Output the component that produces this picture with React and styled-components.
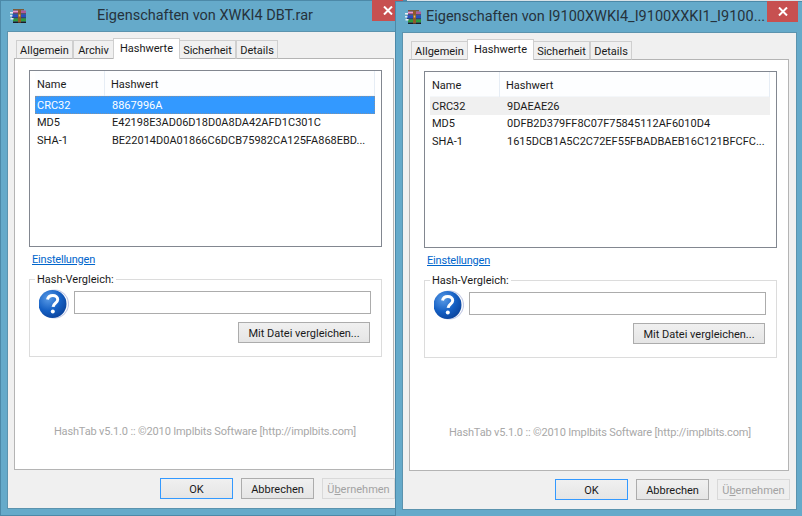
import React from 'react';
import styled, { createGlobalStyle } from 'styled-components';

const GlobalStyle = createGlobalStyle`
  html, body {
    margin: 0;
    padding: 0;
    background: #d8e2e8;
  }
  * {
    box-sizing: border-box;
  }
`;

const Desktop = styled.div`
  position: relative;
  width: 802px;
  height: 516px;
  overflow: hidden;
  font-family: Roboto, "Open Sans", sans-serif;
  font-size: 11px;
  color: #1a1a1a;
`;

const Window = styled.div`
  position: absolute;
  left: ${(p) => p.$left}px;
  top: ${(p) => p.$top}px;
  width: 407px;
  height: 516px;
  display: flex;
  flex-direction: column;
  padding: 0 6px 8px 8px;
  background: #65aaca;
  box-shadow: inset 1px 1px 0 #4c89a8, inset 0 -1px 0 #4c89a8;
`;

const TitleBar = styled.div`
  display: flex;
  align-items: flex-start;
  height: 32px;
  margin: 0 -2px 0 -8px;
  padding-left: 10px;
`;

const AppIcon = styled.svg`
  flex: none;
  width: 16px;
  height: 15px;
  margin-top: 9px;
`;

const TitleText = styled.div`
  flex: 1;
  margin-left: 5px;
  padding-left: ${(p) => (p.$centered ? '7px' : '0')};
  text-align: ${(p) => (p.$centered ? 'center' : 'left')};
  font-size: 14.5px;
  line-height: 32px;
  color: #25323c;
  white-space: nowrap;
`;

const CloseButton = styled.div`
  flex: none;
  display: flex;
  align-items: center;
  justify-content: center;
  width: 31px;
  height: 21px;
  background: #c75050;
`;

const Client = styled.div`
  flex: 1;
  display: flex;
  flex-direction: column;
  padding: 6px 7px 8px 6px;
  background: #f0f0f0;
  box-shadow: 0 0 0 1px #5b93ae;
`;

const TabStrip = styled.div`
  display: flex;
  align-items: flex-end;
  height: 21px;
  padding-left: 2px;
  margin-bottom: -1px;
  position: relative;
  z-index: 1;
`;

const Tab = styled.div`
  display: flex;
  align-items: center;
  justify-content: center;
  width: ${(p) => p.$width}px;
  height: ${(p) => (p.$active ? 21 : 19)}px;
  margin-right: ${(p) => (p.$active ? -1 : 0)}px;
  margin-left: ${(p) => (p.$active ? -1 : 0)}px;
  padding: ${(p) => (p.$active ? '0 0 2px' : '1px 0 0')};
  border: 1px solid #cfcfcf;
  border-bottom: ${(p) => (p.$active ? 'none' : '1px solid #b4b4b4')};
  background: ${(p) => (p.$active ? '#fff' : '#f0f0f0')};
  position: relative;
  z-index: ${(p) => (p.$active ? 2 : 0)};
`;

const Page = styled.div`
  width: 380px;
  height: 412px;
  display: flex;
  flex-direction: column;
  padding: 11px 11px 0 14px;
  background: #fff;
  border: 1px solid #b4b4b4;
`;

const HashList = styled.div`
  flex: none;
  height: 177px;
  padding: 0 6px 0 5px;
  border: 1px solid #828790;
  background: #fff;
`;

const HeaderRow = styled.div`
  display: flex;
  height: 25px;
  background: #fdfeff;
  box-shadow: inset 0 -1px 0 #f4f7fa;
`;

const HeaderCell = styled.div`
  display: flex;
  align-items: center;
  width: ${(p) => p.$width}px;
  flex: ${(p) => (p.$grow ? 1 : 'none')};
  padding-left: ${(p) => p.$indent}px;
  padding-top: 1px;
  border-right: 1px solid #e6edf5;
`;

const Row = styled.div`
  display: flex;
  align-items: center;
  height: 17.5px;
  padding-top: 1px;
  background: ${(p) => (p.$selected ? '#3399ff' : p.$muted ? '#f0f0f0' : 'transparent')};
  color: ${(p) => (p.$selected ? '#fff' : 'inherit')};
  outline: ${(p) => (p.$selected ? '1px dotted rgba(190, 140, 90, 0.55)' : 'none')};
  outline-offset: -1px;
  white-space: nowrap;
`;

const NameCell = styled.div`
  flex: none;
  width: 77px;
  padding-left: 2px;
`;

const SettingsLink = styled.a`
  align-self: flex-start;
  margin: 5px 0 -1px 3px;
  line-height: 16px;
  letter-spacing: -0.2px;
  color: #0066cc;
  text-decoration: underline;
`;

const CompareGroup = styled.fieldset`
  flex: none;
  min-width: 0;
  margin: 4px 0 0;
  padding: 4px 10px 12px 9px;
  height: 86px;
  border: 1px solid #dcdcdc;
`;

const GroupLegend = styled.legend`
  position: relative;
  top: 1px;
  margin-left: -4px;
  padding: 0 2px;
  line-height: 16px;
`;

const CompareRow = styled.div`
  display: flex;
  align-items: flex-start;
  gap: 5px;
  height: 23px;
`;

const HelpIcon = styled.svg`
  flex: none;
  width: 30px;
  height: 30px;
  margin-top: -2px;
`;

const CompareInput = styled.div`
  flex: 1;
  height: 23px;
  border: 1px solid #acacac;
  background: #fff;
`;

const CompareActions = styled.div`
  display: flex;
  justify-content: flex-end;
  margin: 8px 1px 0 0;
`;

const Button = styled.div`
  display: flex;
  align-items: center;
  justify-content: center;
  width: ${(p) => p.$width}px;
  height: 21px;
  padding-top: 1px;
  border: 1px solid ${(p) => (p.$primary ? '#3399ff' : p.$disabled ? '#d9d9d9' : '#acacac')};
  background: ${(p) => (p.$disabled ? '#efefef' : 'linear-gradient(#f0f0f0, #e5e5e5)')};
  color: ${(p) => (p.$disabled ? '#a3a3a3' : 'inherit')};
`;

const Credit = styled.div`
  margin-top: 65px;
  margin-left: -14px;
  margin-right: -11px;
  padding-left: 2px;
  line-height: 20px;
  letter-spacing: -0.15px;
  text-align: center;
  color: #a8a8a8;
`;

const ButtonBar = styled.div`
  display: flex;
  justify-content: flex-end;
  gap: 8px;
  margin: 8px -1px 0 0;
`;

const WinRarIcon = () => (
  <AppIcon viewBox="0 0 16 15">
    <rect x="3" y="0" width="11" height="1.5" fill="#7a5a3a" />
    <rect x="3" y="1.5" width="13" height="3" fill="#b05a9a" />
    <rect x="3" y="2" width="5" height="1" fill="#e8a0c8" />
    <rect x="3" y="4.5" width="13" height="1" fill="#20202a" />
    <rect x="2" y="5.5" width="14" height="3" fill="#2a4cc0" />
    <rect x="2" y="8.5" width="14" height="1" fill="#141422" />
    <rect x="3" y="9.5" width="13" height="3" fill="#2f9a3c" />
    <rect x="3" y="12.5" width="13" height="1.5" fill="#1a1a24" />
    <rect x="0" y="3" width="3" height="1.5" fill="#e8eef2" />
    <rect x="0" y="6" width="2.5" height="1.5" fill="#dfe8ee" />
    <rect x="0.5" y="9" width="3" height="1.5" fill="#e8eef2" />
    <rect x="8" y="1" width="3" height="12.5" fill="#8f5a2a" />
    <rect x="8.7" y="5.5" width="1.6" height="2" fill="#e6c060" />
  </AppIcon>
);

const QuestionIcon = ({ id }) => (
  <HelpIcon viewBox="0 0 30 30">
    <defs>
      <radialGradient id={id} cx="0.35" cy="0.3" r="0.8">
        <stop offset="0" stopColor="#5a9be6" />
        <stop offset="0.55" stopColor="#1560c4" />
        <stop offset="1" stopColor="#0a3f96" />
      </radialGradient>
    </defs>
    <circle cx="15.5" cy="15" r="14" fill="none" stroke="#c4cbe6" strokeWidth="1.2" />
    <circle cx="13.5" cy="15" r="14" fill={`url(#${id})`} />
    <path
      d="M8.5 10.5c.6-2.6 2.8-4 5.3-4 2.8 0 4.9 1.6 4.9 4 0 3.6-4.4 3.6-4.6 7.4"
      fill="none"
      stroke="#fff"
      strokeWidth="3"
    />
    <circle cx="13.8" cy="22.4" r="2" fill="#fff" />
  </HelpIcon>
);

const CloseGlyph = () => (
  <svg width="10" height="9" viewBox="0 0 10 9">
    <path d="M1 0.5 9 8.5M9 0.5 1 8.5" stroke="#fff" strokeWidth="2" />
  </svg>
);

const Dialog = ({ left, top, title, centered, tabs, rows, rowStyle }) => (
  <Window $left={left} $top={top}>
    <TitleBar>
      <WinRarIcon />
      <TitleText $centered={centered}>{title}</TitleText>
      <CloseButton>
        <CloseGlyph />
      </CloseButton>
    </TitleBar>
    <Client>
      <TabStrip>
        {tabs.map((tab) => (
          <Tab key={tab.label} $width={tab.width} $active={tab.active}>
            {tab.label}
          </Tab>
        ))}
      </TabStrip>
      <Page>
        <HashList>
          <HeaderRow>
            <HeaderCell $width={70} $indent={2}>Name</HeaderCell>
            <HeaderCell $grow $indent={6}>Hashwert</HeaderCell>
          </HeaderRow>
          {rows.map((row, i) => (
            <Row
              key={row[0]}
              $selected={i === 0 && rowStyle === 'selected'}
              $muted={i === 0 && rowStyle === 'muted'}
            >
              <NameCell>{row[0]}</NameCell>
              <div>{row[1]}</div>
            </Row>
          ))}
        </HashList>
        <SettingsLink>Einstellungen</SettingsLink>
        <CompareGroup>
          <GroupLegend>Hash-Vergleich:</GroupLegend>
          <CompareRow>
            <QuestionIcon id={`helpBlue${left}`} />
            <CompareInput />
          </CompareRow>
          <CompareActions>
            <Button $width={132}>Mit Datei vergleichen...</Button>
          </CompareActions>
        </CompareGroup>
        <Credit>HashTab v5.1.0 :: ©2010 Implbits Software [http://implbits.com]</Credit>
      </Page>
      <ButtonBar>
        <Button $width={73} $primary>OK</Button>
        <Button $width={73}>Abbrechen</Button>
        <Button $width={73} $disabled>
          <span>Ü<u>b</u>ernehmen</span>
        </Button>
      </ButtonBar>
    </Client>
  </Window>
);

const App = () => (
  <Desktop>
    <GlobalStyle />
    <Dialog
      left={0}
      top={0}
      title="Eigenschaften von XWKI4 DBT.rar"
      centered
      rowStyle="selected"
      tabs={[
        { label: 'Allgemein', width: 57 },
        { label: 'Archiv', width: 41 },
        { label: 'Hashwerte', width: 67, active: true },
        { label: 'Sicherheit', width: 57 },
        { label: 'Details', width: 42 },
      ]}
      rows={[
        ['CRC32', '8867996A'],
        ['MD5', 'E42198E3AD06D18D0A8DA42AFD1C301C'],
        ['SHA-1', 'BE22014D0A01866C6DCB75982CA125FA868EBD...'],
      ]}
    />
    <Dialog
      left={395}
      top={1}
      title="Eigenschaften von I9100XWKI4_I9100XXKI1_I9100..."
      rowStyle="muted"
      tabs={[
        { label: 'Allgemein', width: 57 },
        { label: 'Hashwerte', width: 67, active: true },
        { label: 'Sicherheit', width: 57 },
        { label: 'Details', width: 42 },
      ]}
      rows={[
        ['CRC32', '9DAEAE26'],
        ['MD5', '0DFB2D379FF8C07F75845112AF6010D4'],
        ['SHA-1', '1615DCB1A5C2C72EF55FBADBAEB16C121BFCFC...'],
      ]}
    />
  </Desktop>
);

export default App;
